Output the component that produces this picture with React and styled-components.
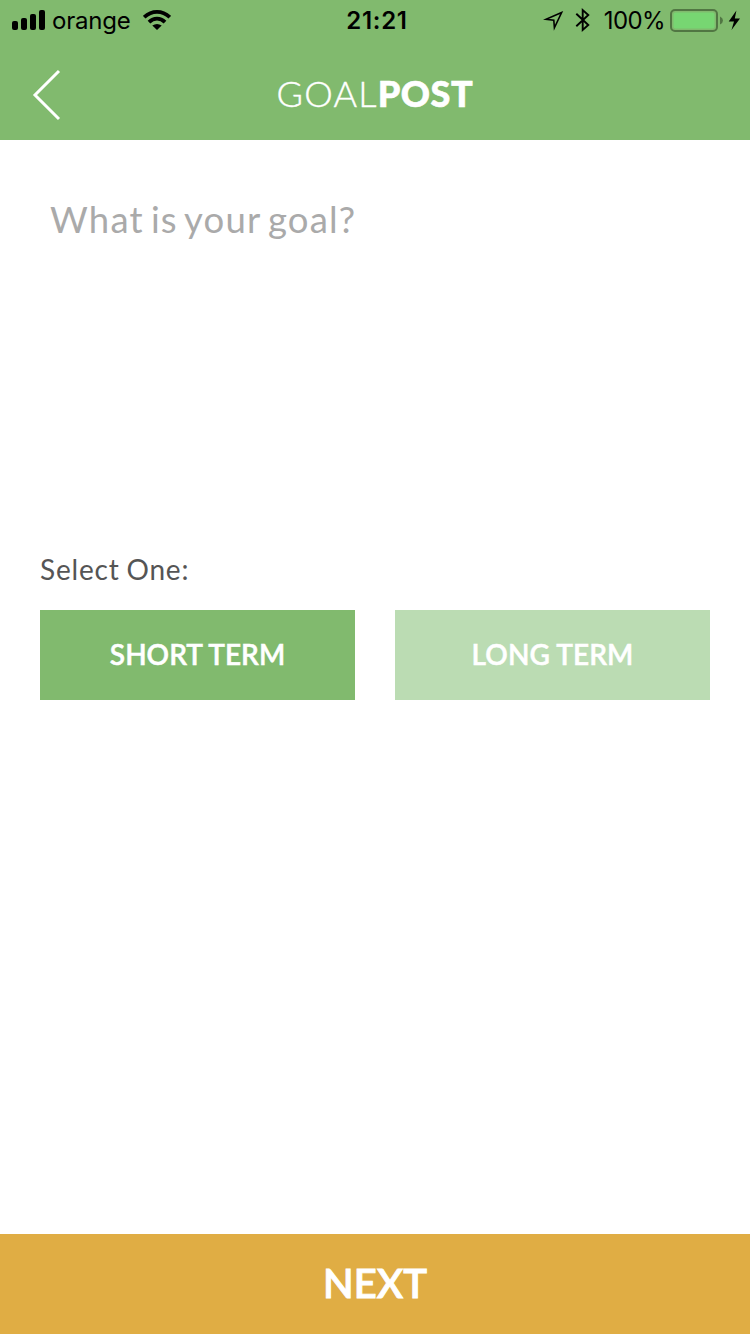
import React from "react";
import styled, { createGlobalStyle } from "styled-components";

const GlobalStyle = createGlobalStyle`
  * { box-sizing: border-box; }
  body { margin: 0; background: #ffffff; }
`;

const Screen = styled.div`
  display: flex;
  flex-direction: column;
  width: 750px;
  height: 1334px;
  overflow: hidden;
  background: #ffffff;
  font-family: Lato, "Open Sans", sans-serif;
`;

const Header = styled.header`
  display: flex;
  flex-direction: column;
  height: 140px;
  flex: none;
  background: #81ba6e;
`;

const StatusBar = styled.div`
  display: grid;
  grid-template-columns: 1fr auto 1fr;
  align-items: center;
  height: 40px;
  padding: 0 10px 0 12px;
  color: #000000;
  font-family: Inter, "Liberation Sans", sans-serif;
  font-size: 24px;
`;

const StatusGroup = styled.div`
  display: flex;
  align-items: center;
  height: 40px;
  justify-content: ${(p) => (p.$end ? "flex-end" : "flex-start")};
`;

const StatusText = styled.span`
  padding-top: 2px;
  line-height: 38px;
`;

const Carrier = styled(StatusText)`
  margin: 0 12px 0 7px;
  letter-spacing: -0.2px;
`;

const Clock = styled(StatusText)`
  margin-left: 2px;
  font-weight: 600;
  letter-spacing: 0.7px;
`;

const Percent = styled(StatusText)`
  margin: 0 5px 0 13px;
  letter-spacing: -0.6px;
`;

const BluetoothGap = styled.span`
  width: 10px;
`;

const NavBar = styled.nav`
  display: grid;
  grid-template-columns: 1fr auto 1fr;
  align-items: center;
  height: 100px;
`;

const BackButton = styled.button`
  display: flex;
  align-items: center;
  width: 70px;
  height: 100px;
  padding: 10px 0 0 30px;
  border: 0;
  background: none;
`;

const Brand = styled.h1`
  margin: 6px 0 0;
  color: #ffffff;
  font-size: 36px;
  font-weight: 300;
  line-height: 44px;
  letter-spacing: 1.2px;
  -webkit-text-stroke: 0.4px #ffffff;
`;

const BrandStrong = styled.span`
  font-weight: 900;
  letter-spacing: 0.6px;
  -webkit-text-stroke: 0.6px #ffffff;
`;

const Form = styled.main`
  display: flex;
  flex-direction: column;
  flex: 1;
  padding: 40px 40px 0;
`;

const GoalInput = styled.textarea`
  display: block;
  width: 670px;
  height: 360px;
  padding: 17px 10px;
  border: 0;
  outline: 0;
  resize: none;
  background: transparent;
  color: #555555;
  font: 400 36.5px/44px Lato, "Open Sans", sans-serif;
  letter-spacing: 1.2px;
  word-spacing: -3.4px;

  &::placeholder {
    color: #aaaaaa;
    opacity: 1;
  }
`;

const FieldLabel = styled.p`
  height: 36px;
  margin: 11px 0 23px;
  color: #555555;
  font-size: 28px;
  line-height: 36px;
  letter-spacing: 0.8px;
  word-spacing: -1px;
`;

const Options = styled.div`
  display: grid;
  grid-template-columns: 1fr 1fr;
  gap: 40px;
`;

const OptionButton = styled.button`
  height: 90px;
  padding: 0 0 2px;
  border: 0;
  background: ${(p) => (p.$selected ? "#81ba6e" : "#bbdcb3")};
  color: #ffffff;
  font: 600 28px/36px Lato, "Open Sans", sans-serif;
  letter-spacing: ${(p) => p.$tracking}px;
  -webkit-text-stroke: 0.5px #ffffff;
`;

const NextButton = styled.button`
  height: 100px;
  flex: none;
  padding: 0 0 2px;
  border: 0;
  background: #e0ad44;
  color: #ffffff;
  font: 600 40px/48px Lato, "Open Sans", sans-serif;
  -webkit-text-stroke: 0.9px #ffffff;
`;

const Icon = styled.svg`
  display: block;
  flex: none;
`;

const SignalIcon = () => (
  <Icon width="33" height="40" viewBox="0 0 33 40">
    <rect x="0" y="21" width="6" height="9" rx="2" />
    <rect x="9" y="18" width="6" height="12" rx="2" />
    <rect x="18" y="14" width="6" height="16" rx="2" />
    <rect x="27" y="10" width="6" height="20" rx="2" />
  </Icon>
);

const WifiIcon = () => (
  <Icon width="28" height="40" viewBox="0 0 28 40" fill="none" stroke="#000" strokeWidth="3.8">
    <path d="M1.2 17.2Q6.9 11.8 14 11.8T26.8 17.2" />
    <path d="M6 22.2Q9.5 18.7 14 18.7T22 22.2" />
    <path d="M14 30L9.3 25.6Q14 22.2 18.7 25.6Z" fill="#000" stroke="none" />
  </Icon>
);

const LocationIcon = () => (
  <Icon width="22" height="40" viewBox="0 0 22 40" fill="none" stroke="#000" strokeWidth="1.6">
    <path d="M18.6 12.6L3 19.3L10.8 20.2L11.4 27.8Z" strokeMiterlimit="8" />
  </Icon>
);

const BluetoothIcon = () => (
  <Icon width="16" height="40" viewBox="0 0 16 40" fill="none" stroke="#000" strokeWidth="1.9">
    <path d="M1.3 13.7L13.3 25L7.7 30V10L13.3 15L1.3 26.3" />
  </Icon>
);

const BatteryIcon = () => (
  <Icon width="70" height="40" viewBox="0 0 70 40">
    <rect x="1" y="10" width="46" height="21" rx="4" fill="none" stroke="#517643" strokeWidth="2" />
    <rect x="3.5" y="12.5" width="41" height="16" rx="2" fill="#77d672" />
    <path d="M50 16.5Q53 18 53 20.5T50 24.5Z" fill="#517643" />
    <path d="M66.4 10.5L58.7 21.5H64L61.5 30L70 18.5H64.8Z" fill="#000" />
  </Icon>
);

export default function App() {
  return (
    <Screen>
      <GlobalStyle />
      <Header>
        <StatusBar>
          <StatusGroup>
            <SignalIcon />
            <Carrier>orange</Carrier>
            <WifiIcon />
          </StatusGroup>
          <Clock>21:21</Clock>
          <StatusGroup $end>
            <LocationIcon />
            <BluetoothGap />
            <BluetoothIcon />
            <Percent>100%</Percent>
            <BatteryIcon />
          </StatusGroup>
        </StatusBar>
        <NavBar>
          <BackButton aria-label="Back">
            <Icon width="32" height="52" viewBox="0 0 32 52" fill="none" stroke="#fff" strokeWidth="3">
              <path d="M29 2L5 26L29 50" />
            </Icon>
          </BackButton>
          <Brand>
            GOAL<BrandStrong>POST</BrandStrong>
          </Brand>
        </NavBar>
      </Header>
      <Form>
        <GoalInput placeholder="What is your goal?" />
        <FieldLabel>Select One:</FieldLabel>
        <Options>
          <OptionButton $selected $tracking={0}>SHORT TERM</OptionButton>
          <OptionButton $tracking={0.1}>LONG TERM</OptionButton>
        </Options>
      </Form>
      <NextButton>NEXT</NextButton>
    </Screen>
  );
}
